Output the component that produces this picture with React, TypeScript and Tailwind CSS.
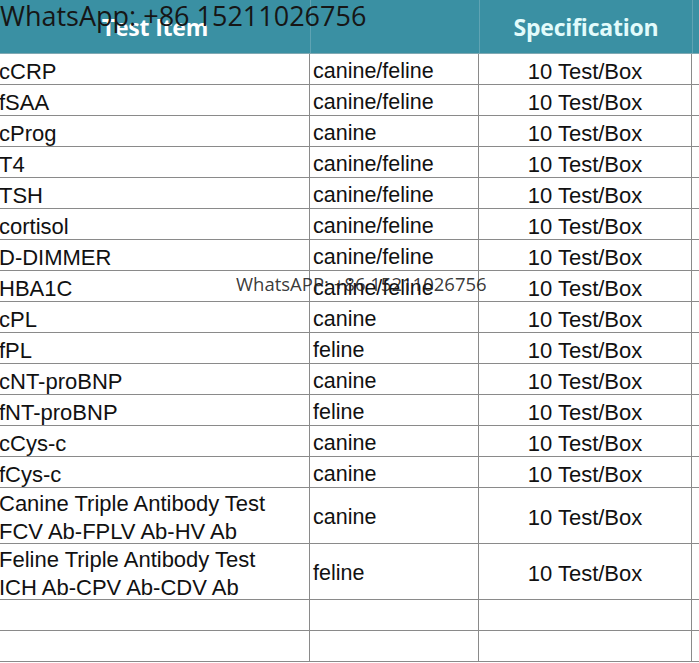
import React from "react";

type Row = { item: string[]; species: string; spec: string };

const ROWS: Row[] = [
  { item: ["cCRP"], species: "canine/feline", spec: "10 Test/Box" },
  { item: ["fSAA"], species: "canine/feline", spec: "10 Test/Box" },
  { item: ["cProg"], species: "canine", spec: "10 Test/Box" },
  { item: ["T4"], species: "canine/feline", spec: "10 Test/Box" },
  { item: ["TSH"], species: "canine/feline", spec: "10 Test/Box" },
  { item: ["cortisol"], species: "canine/feline", spec: "10 Test/Box" },
  { item: ["D-DIMMER"], species: "canine/feline", spec: "10 Test/Box" },
  { item: ["HBA1C"], species: "canine/feline", spec: "10 Test/Box" },
  { item: ["cPL"], species: "canine", spec: "10 Test/Box" },
  { item: ["fPL"], species: "feline", spec: "10 Test/Box" },
  { item: ["cNT-proBNP"], species: "canine", spec: "10 Test/Box" },
  { item: ["fNT-proBNP"], species: "feline", spec: "10 Test/Box" },
  { item: ["cCys-c"], species: "canine", spec: "10 Test/Box" },
  { item: ["fCys-c"], species: "canine", spec: "10 Test/Box" },
  {
    item: ["Canine Triple Antibody Test", "FCV Ab-FPLV Ab-HV Ab"],
    species: "canine",
    spec: "10 Test/Box",
  },
  {
    item: ["Feline Triple Antibody Test", "ICH Ab-CPV Ab-CDV Ab"],
    species: "feline",
    spec: "10 Test/Box",
  },
  { item: [], species: "", spec: "" },
  { item: [], species: "", spec: "" },
];

export default function App() {
  return (
    <div className="relative w-[699px] h-[663px] overflow-hidden bg-white font-['Liberation_Sans',Arial,sans-serif] text-[21.5px] text-[#111]">
      {/* Header */}
      <div className="flex h-[54px] bg-[#3a90a3] border-b border-[#7fa9b3] font-['Open_Sans',sans-serif] font-bold text-[23px] tracking-[-0.2px]">
        <div className="w-[311px] shrink-0 flex items-center justify-center pt-[2px] border-r border-[#5fa3b3] text-white">
          Test Item
        </div>
        <div className="w-[169px] shrink-0 border-r border-[#5fa3b3]" />
        <div className="w-[213px] shrink-0 flex items-center justify-center pt-[2px] border-r border-[#5fa3b3] text-[#e2fbfb]">
          Specification
        </div>
        <div className="flex-1" />
      </div>

      {/* Body rows */}
      {ROWS.map((r, i) => {
        const tall = r.item.length > 1;
        return (
          <div
            key={i}
            className={`flex border-b border-[#8a8a8a] ${tall ? "h-[56px] pt-[4px]" : "h-[31px] pt-[5px]"}`}
          >
            <div className="w-[311px] shrink-0 -mt-[5px] pt-[5px] flex flex-col justify-center border-r border-[#8a8a8a] leading-[28px] -ml-[1px] whitespace-nowrap text-[22px]">
              {r.item.map((t) => (
                <span key={t}>{t}</span>
              ))}
            </div>
            <div className="w-[169px] shrink-0 -mt-[5px] pt-[5px] flex items-center pl-[3px] border-r border-[#8a8a8a] whitespace-nowrap">
              {r.species}
            </div>
            <div className="w-[213px] shrink-0 -mt-[5px] pt-[5px] flex items-center justify-center border-r border-[#8a8a8a] whitespace-nowrap text-[22px]">
              {r.spec}
            </div>
            <div className="flex-1" />
          </div>
        );
      })}

      {/* Watermarks */}
      <div className="absolute left-0 top-[-4px] font-['Open_Sans',sans-serif] text-[27px] text-[#161616] whitespace-nowrap leading-normal">
        WhatsApp: +86 15211026756
      </div>
      <div className="absolute left-[236px] top-[270px] font-['Open_Sans',sans-serif] text-[18.5px] text-[#222]/90 whitespace-nowrap leading-normal">
        WhatsAPP: +86 15211026756
      </div>
    </div>
  );
}
